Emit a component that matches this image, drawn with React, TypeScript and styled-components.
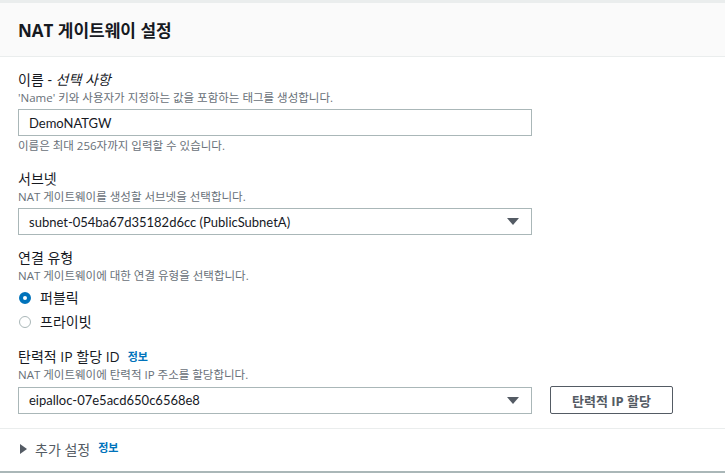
import styled, {createGlobalStyle} from "styled-components";

const GlobalStyle = createGlobalStyle`
    html, body {
        margin: 0;
        padding: 0;
        background: #ffffff;
    }
    body {
        font-family: "Open Sans", "Noto Sans CJK KR", sans-serif;
        color: #16191f;
    }
`;

const Styled = {
    Panel: styled.div`
        width: 725px;
        height: 473px;
        border-top: 3px solid #eaeded;
        border-bottom: 2px solid #aab7b8;
        box-sizing: border-box;
        background: #ffffff;
        overflow: hidden;
    `,
    Header: styled.div`
        height: 54px;
        background: #fafafa;
        border-bottom: 1px solid #eaeded;
        display: flex;
        align-items: center;
        padding: 0 18px;
        box-sizing: border-box;
    `,
    Title: styled.h2`
        margin: 0;
        font-size: 17px;
        font-weight: 700;
        color: #16191f;
    `,
    Body: styled.div`
        padding: 13px 18px 14px;
        display: flex;
        flex-direction: column;
        gap: 13px;
    `,
    Field: styled.div`
        display: flex;
        flex-direction: column;
    `,
    Label: styled.div`
        font-size: 14px;
        line-height: 20px;
        color: #16191f;
        display: flex;
        align-items: center;
        gap: 8px;
    `,
    Optional: styled.i`
        font-style: italic;
    `,
    Info: styled.a`
        font-size: 11px;
        font-weight: 700;
        color: #0073bb;
        text-decoration: none;
    `,
    Desc: styled.div`
        font-size: 11.5px;
        line-height: 16px;
        color: #687078;
        margin-bottom: 3px;
    `,
    Hint: styled.div`
        font-size: 11.5px;
        line-height: 16px;
        color: #687078;
        margin-top: 2px;
        margin-bottom: 2px;
    `,
    Row: styled.div`
        display: flex;
        align-items: center;
        gap: 18px;
    `,
    Box: styled.div`
        width: 514px;
        height: 27px;
        border: 1px solid #aab7b8;
        box-sizing: border-box;
        display: flex;
        align-items: center;
        justify-content: space-between;
        padding: 0 10px 0 10px;
        font-family: Lato, "Open Sans", sans-serif;
        font-size: 13px;
        color: #16191f;
    `,
    Caret: styled.span`
        width: 0;
        height: 0;
        border-left: 6px solid transparent;
        border-right: 6px solid transparent;
        border-top: 7px solid #545b64;
        margin-right: 2px;
    `,
    Radios: styled.div`
        display: flex;
        flex-direction: column;
        gap: 5px;
        margin-top: 1px;
        margin-bottom: 3px;
    `,
    Radio: styled.label`
        display: flex;
        align-items: center;
        gap: 9px;
        font-size: 14px;
        line-height: 19px;
        color: #16191f;
    `,
    Dot: styled.span<{ $checked?: boolean }>`
        width: 12px;
        height: 12px;
        border-radius: 50%;
        box-sizing: border-box;
        background: #ffffff;
        border: ${p => p.$checked ? "4px solid #0073bb" : "1px solid #aab7b8"};
        margin-left: 1px;
    `,
    Button: styled.button`
        width: 123px;
        height: 28px;
        border: 1px solid #545b64;
        border-radius: 2px;
        background: #ffffff;
        color: #545b64;
        font-family: inherit;
        font-size: 13px;
        font-weight: 700;
        padding: 0;
    `,
    Footer: styled.div`
        border-top: 1px solid #eaeded;
        height: 40px;
        display: flex;
        align-items: center;
        padding: 0 18px;
        gap: 8px;
    `,
    Expand: styled.span`
        width: 0;
        height: 0;
        border-top: 5px solid transparent;
        border-bottom: 5px solid transparent;
        border-left: 7px solid #545b64;
        margin-left: 2px;
    `,
    ExpandText: styled.span`
        font-size: 14px;
        color: #545b64;
    `,
    FooterInfo: styled.a`
        font-size: 11px;
        font-weight: 700;
        color: #0073bb;
        text-decoration: none;
        align-self: flex-start;
        margin-top: 10px;
    `
};

const App = () => {
    return (
        <>
            <GlobalStyle />
            <Styled.Panel>
                <Styled.Header>
                    <Styled.Title>NAT 게이트웨이 설정</Styled.Title>
                </Styled.Header>
                <Styled.Body>
                    <Styled.Field>
                        <Styled.Label>
                            <span>이름 - <Styled.Optional>선택 사항</Styled.Optional></span>
                        </Styled.Label>
                        <Styled.Desc>'Name' 키와 사용자가 지정하는 값을 포함하는 태그를 생성합니다.</Styled.Desc>
                        <Styled.Box>DemoNATGW</Styled.Box>
                        <Styled.Hint>이름은 최대 256자까지 입력할 수 있습니다.</Styled.Hint>
                    </Styled.Field>
                    <Styled.Field>
                        <Styled.Label>서브넷</Styled.Label>
                        <Styled.Desc>NAT 게이트웨이를 생성할 서브넷을 선택합니다.</Styled.Desc>
                        <Styled.Box>
                            subnet-054ba67d35182d6cc (PublicSubnetA)
                            <Styled.Caret />
                        </Styled.Box>
                    </Styled.Field>
                    <Styled.Field>
                        <Styled.Label>연결 유형</Styled.Label>
                        <Styled.Desc>NAT 게이트웨이에 대한 연결 유형을 선택합니다.</Styled.Desc>
                        <Styled.Radios>
                            <Styled.Radio><Styled.Dot $checked />퍼블릭</Styled.Radio>
                            <Styled.Radio><Styled.Dot />프라이빗</Styled.Radio>
                        </Styled.Radios>
                    </Styled.Field>
                    <Styled.Field>
                        <Styled.Label>
                            탄력적 IP 할당 ID
                            <Styled.Info>정보</Styled.Info>
                        </Styled.Label>
                        <Styled.Desc>NAT 게이트웨이에 탄력적 IP 주소를 할당합니다.</Styled.Desc>
                        <Styled.Row>
                            <Styled.Box>
                                eipalloc-07e5acd650c6568e8
                                <Styled.Caret />
                            </Styled.Box>
                            <Styled.Button>탄력적 IP 할당</Styled.Button>
                        </Styled.Row>
                    </Styled.Field>
                </Styled.Body>
                <Styled.Footer>
                    <Styled.Expand />
                    <Styled.ExpandText>추가 설정</Styled.ExpandText>
                    <Styled.FooterInfo>정보</Styled.FooterInfo>
                </Styled.Footer>
            </Styled.Panel>
        </>
    );
};

export default App;
